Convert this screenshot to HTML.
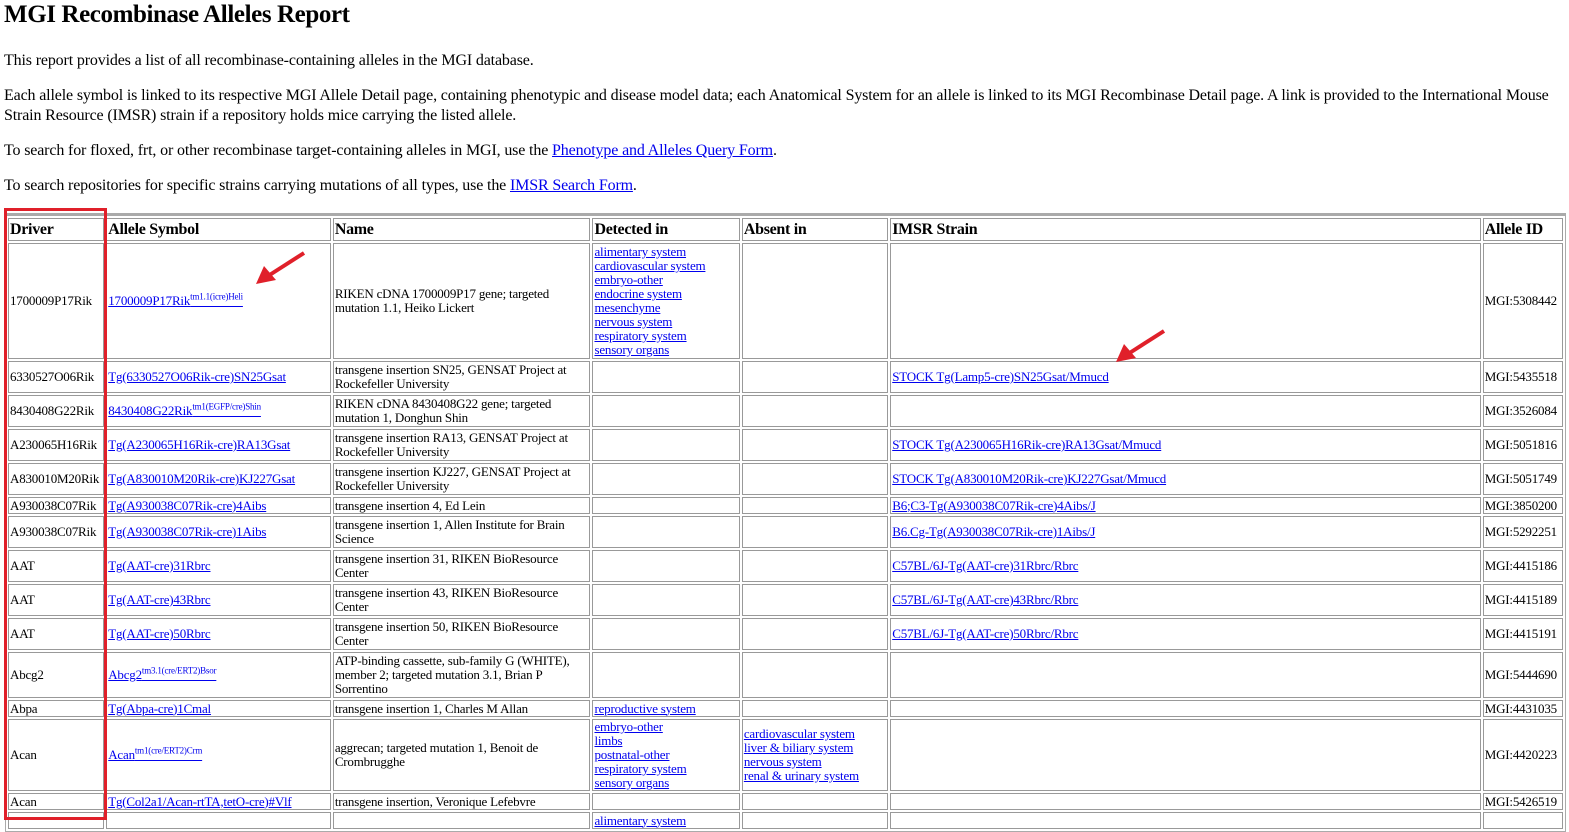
<!DOCTYPE html>
<html><head><meta charset="utf-8">
<style>
body{margin:0;background:#fff;font-family:"Liberation Serif",serif;color:#000;position:relative;width:1569px;height:822px;overflow:hidden}
h1{position:absolute;left:4px;top:1px;margin:0;font-size:25px;font-weight:bold;letter-spacing:-0.4px}
p{position:absolute;left:4px;margin:0;font-size:16px;line-height:20px;letter-spacing:-0.15px}
a{color:#00e}
table{position:absolute;left:5px;top:213px;width:1561px;border:1px solid #aaa;border-top:3px solid #aaa;border-collapse:separate;border-spacing:2px;table-layout:fixed;font-size:13px;line-height:14px;letter-spacing:-0.2px}
td,th{border:1px solid #999;padding:0 1px;vertical-align:middle;text-align:left;overflow:hidden;white-space:nowrap}
th{font-size:16px;font-weight:bold;height:21px;letter-spacing:-0.3px}
td.w{white-space:normal}
sup{font-size:9px;line-height:0}
.red{position:absolute;left:4px;top:208px;width:97px;height:606px;border:3px solid #e0202a}
.arr{position:absolute}
</style></head><body>
<h1>MGI Recombinase Alleles Report</h1>
<p style="top:51px">This report provides a list of all recombinase-containing alleles in the MGI database.</p>
<p style="top:86px;width:1545px">Each allele symbol is linked to its respective MGI Allele Detail page, containing phenotypic and disease model data; each Anatomical System for an allele is linked to its MGI Recombinase Detail page. A link is provided to the International Mouse Strain Resource (IMSR) strain if a repository holds mice carrying the listed allele.</p>
<p style="top:141px">To search for floxed, frt, or other recombinase target-containing alleles in MGI, use the <a href="#">Phenotype and Alleles Query Form</a>.</p>
<p style="top:176px">To search repositories for specific strains carrying mutations of all types, use the <a href="#">IMSR Search Form</a>.</p>
<table>
<colgroup><col style="width:96px"><col style="width:224px"><col style="width:257px"><col style="width:147px"><col style="width:146px"><col style="width:589px"><col style="width:80px"></colgroup>
<tr><th>Driver</th><th>Allele Symbol</th><th>Name</th><th>Detected in</th><th>Absent in</th><th>IMSR Strain</th><th>Allele ID</th></tr>
<tr style="height:116px"><td>1700009P17Rik</td><td><a href="#">1700009P17Rik<sup>tm1.1(icre)Heli</sup></a></td><td class="w">RIKEN cDNA 1700009P17 gene; targeted mutation 1.1, Heiko Lickert</td><td><a href="#">alimentary system</a><br><a href="#">cardiovascular system</a><br><a href="#">embryo-other</a><br><a href="#">endocrine system</a><br><a href="#">mesenchyme</a><br><a href="#">nervous system</a><br><a href="#">respiratory system</a><br><a href="#">sensory organs</a></td><td></td><td></td><td>MGI:5308442</td></tr>
<tr style="height:32px"><td>6330527O06Rik</td><td><a href="#">Tg(6330527O06Rik-cre)SN25Gsat</a></td><td class="w">transgene insertion SN25, GENSAT Project at Rockefeller University</td><td></td><td></td><td><a href="#">STOCK Tg(Lamp5-cre)SN25Gsat/Mmucd</a></td><td>MGI:5435518</td></tr>
<tr style="height:32px"><td>8430408G22Rik</td><td><a href="#">8430408G22Rik<sup>tm1(EGFP/cre)Shin</sup></a></td><td class="w">RIKEN cDNA 8430408G22 gene; targeted mutation 1, Donghun Shin</td><td></td><td></td><td></td><td>MGI:3526084</td></tr>
<tr style="height:32px"><td>A230065H16Rik</td><td><a href="#">Tg(A230065H16Rik-cre)RA13Gsat</a></td><td class="w">transgene insertion RA13, GENSAT Project at Rockefeller University</td><td></td><td></td><td><a href="#">STOCK Tg(A230065H16Rik-cre)RA13Gsat/Mmucd</a></td><td>MGI:5051816</td></tr>
<tr style="height:32px"><td>A830010M20Rik</td><td><a href="#">Tg(A830010M20Rik-cre)KJ227Gsat</a></td><td class="w">transgene insertion KJ227, GENSAT Project at Rockefeller University</td><td></td><td></td><td><a href="#">STOCK Tg(A830010M20Rik-cre)KJ227Gsat/Mmucd</a></td><td>MGI:5051749</td></tr>
<tr style="height:17px"><td>A930038C07Rik</td><td><a href="#">Tg(A930038C07Rik-cre)4Aibs</a></td><td class="w">transgene insertion 4, Ed Lein</td><td></td><td></td><td><a href="#">B6;C3-Tg(A930038C07Rik-cre)4Aibs/J</a></td><td>MGI:3850200</td></tr>
<tr style="height:32px"><td>A930038C07Rik</td><td><a href="#">Tg(A930038C07Rik-cre)1Aibs</a></td><td class="w">transgene insertion 1, Allen Institute for Brain Science</td><td></td><td></td><td><a href="#">B6.Cg-Tg(A930038C07Rik-cre)1Aibs/J</a></td><td>MGI:5292251</td></tr>
<tr style="height:32px"><td>AAT</td><td><a href="#">Tg(AAT-cre)31Rbrc</a></td><td class="w">transgene insertion 31, RIKEN BioResource Center</td><td></td><td></td><td><a href="#">C57BL/6J-Tg(AAT-cre)31Rbrc/Rbrc</a></td><td>MGI:4415186</td></tr>
<tr style="height:32px"><td>AAT</td><td><a href="#">Tg(AAT-cre)43Rbrc</a></td><td class="w">transgene insertion 43, RIKEN BioResource Center</td><td></td><td></td><td><a href="#">C57BL/6J-Tg(AAT-cre)43Rbrc/Rbrc</a></td><td>MGI:4415189</td></tr>
<tr style="height:32px"><td>AAT</td><td><a href="#">Tg(AAT-cre)50Rbrc</a></td><td class="w">transgene insertion 50, RIKEN BioResource Center</td><td></td><td></td><td><a href="#">C57BL/6J-Tg(AAT-cre)50Rbrc/Rbrc</a></td><td>MGI:4415191</td></tr>
<tr style="height:46px"><td>Abcg2</td><td><a href="#">Abcg2<sup>tm3.1(cre/ERT2)Bsor</sup></a></td><td class="w">ATP-binding cassette, sub-family G (WHITE), member 2; targeted mutation 3.1, Brian P Sorrentino</td><td></td><td></td><td></td><td>MGI:5444690</td></tr>
<tr style="height:17px"><td>Abpa</td><td><a href="#">Tg(Abpa-cre)1Cmal</a></td><td class="w">transgene insertion 1, Charles M Allan</td><td><a href="#">reproductive system</a></td><td></td><td></td><td>MGI:4431035</td></tr>
<tr style="height:72px"><td>Acan</td><td><a href="#">Acan<sup>tm1(cre/ERT2)Crm</sup></a></td><td class="w">aggrecan; targeted mutation 1, Benoit de Crombrugghe</td><td><a href="#">embryo-other</a><br><a href="#">limbs</a><br><a href="#">postnatal-other</a><br><a href="#">respiratory system</a><br><a href="#">sensory organs</a></td><td><a href="#">cardiovascular system</a><br><a href="#">liver &amp; biliary system</a><br><a href="#">nervous system</a><br><a href="#">renal &amp; urinary system</a></td><td></td><td>MGI:4420223</td></tr>
<tr style="height:17px"><td>Acan</td><td><a href="#">Tg(Col2a1/Acan-rtTA,tetO-cre)#Vlf</a></td><td class="w">transgene insertion, Veronique Lefebvre</td><td></td><td></td><td></td><td>MGI:5426519</td></tr>
<tr style="height:17px"><td></td><td></td><td></td><td><a href="#">alimentary system</a></td><td></td><td></td><td></td></tr>
</table>
<div class="red"></div>
<svg class="arr" style="left:254px;top:250px" width="54" height="36" viewBox="0 0 54 36"><line x1="50" y1="3" x2="14" y2="26" stroke="#e0202a" stroke-width="4"/><polygon points="2,34 10,16 22,30" fill="#e0202a"/></svg>
<svg class="arr" style="left:1114px;top:328px" width="54" height="36" viewBox="0 0 54 36"><line x1="50" y1="3" x2="14" y2="26" stroke="#e0202a" stroke-width="4"/><polygon points="2,34 10,16 22,30" fill="#e0202a"/></svg>
</body></html>
